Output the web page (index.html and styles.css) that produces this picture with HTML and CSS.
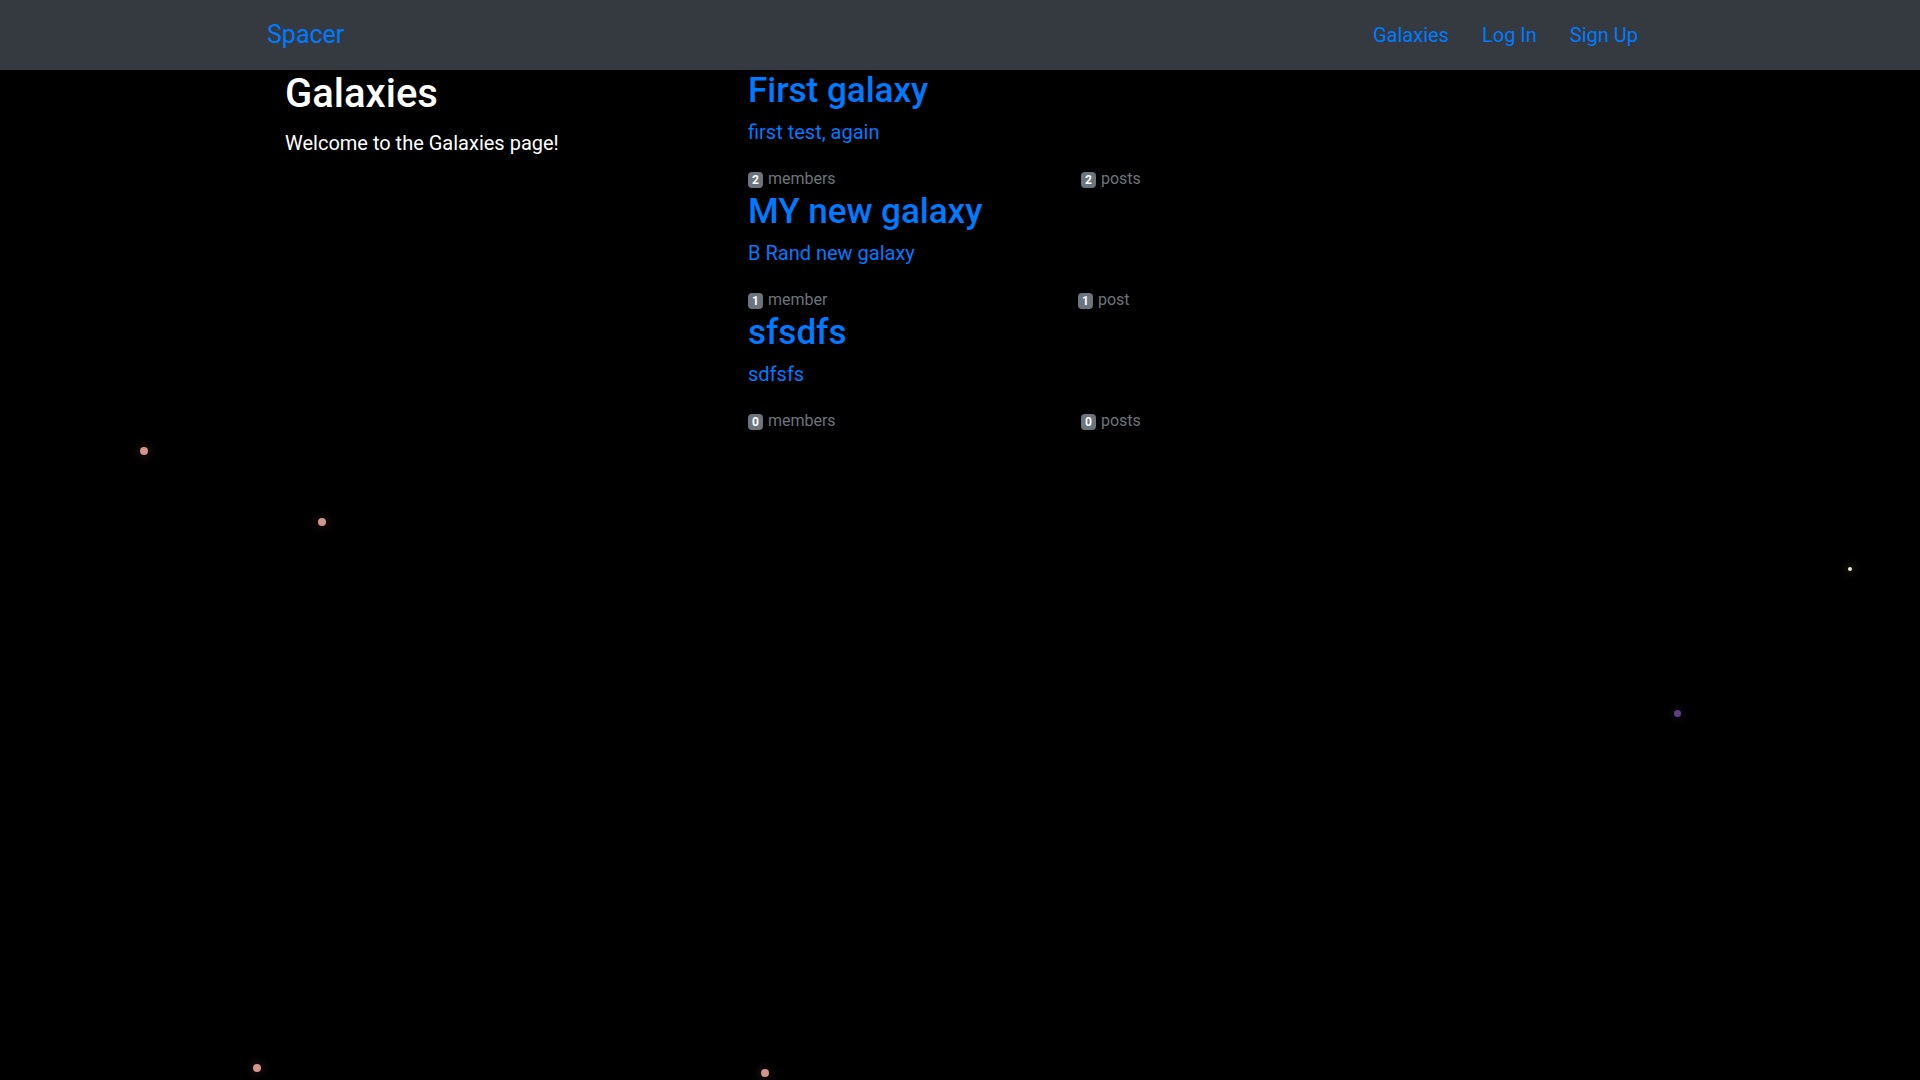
FILE: index.html
```html
<!DOCTYPE html>
<html lang="en">
<head>
<meta charset="utf-8">
<title>Spacer</title>
<link rel="stylesheet" href="styles.css">
</head>
<body>
<div class="sky">
  <span class="star star-pink" style="left:140px;top:447px"></span>
  <span class="star star-pink" style="left:318px;top:518px"></span>
  <span class="star star-cream" style="left:1848px;top:567px"></span>
  <span class="star star-purple" style="left:1674px;top:710px"></span>
  <span class="star star-pink" style="left:253px;top:1064px"></span>
  <span class="star star-pink" style="left:761px;top:1069px"></span>
</div>
<nav class="navbar">
  <div class="nav-inner">
    <a class="brand" href="#">Spacer</a>
    <div class="nav-links">
      <a class="nav-link" href="#">Galaxies</a>
      <a class="nav-link" href="#">Log In</a>
      <a class="nav-link" href="#">Sign Up</a>
    </div>
  </div>
</nav>
<main class="main">
  <section class="intro">
    <h1 class="page-title">Galaxies</h1>
    <p class="welcome">Welcome to the Galaxies page!</p>
  </section>
  <section class="galaxy-list">
    <div class="galaxy">
      <a class="galaxy-title" href="#">First galaxy</a>
      <a class="galaxy-desc" href="#">first test, again</a>
      <div class="meta">
        <span class="meta-item"><span class="badge">2</span>members</span>
        <span class="meta-item"><span class="badge">2</span>posts</span>
      </div>
    </div>
    <div class="galaxy">
      <a class="galaxy-title" href="#">MY new galaxy</a>
      <a class="galaxy-desc" href="#">B Rand new galaxy</a>
      <div class="meta">
        <span class="meta-item"><span class="badge">1</span>member</span>
        <span class="meta-item shift"><span class="badge">1</span>post</span>
      </div>
    </div>
    <div class="galaxy">
      <a class="galaxy-title" href="#">sfsdfs</a>
      <a class="galaxy-desc" href="#">sdfsfs</a>
      <div class="meta">
        <span class="meta-item"><span class="badge">0</span>members</span>
        <span class="meta-item"><span class="badge">0</span>posts</span>
      </div>
    </div>
  </section>
</main>
</body>
</html>
```
FILE: styles.css
```css
html, body {
  margin: 0;
  padding: 0;
}
body {
  background: #000;
  color: #fff;
  font-family: Roboto, "Liberation Sans", sans-serif;
  font-size: 20px;
  line-height: 1.5;
  min-height: 1080px;
  position: relative;
  overflow: hidden;
}
a {
  color: #007bff;
  text-decoration: none;
}
.sky {
  position: absolute;
  inset: 0;
  pointer-events: none;
}
.star {
  position: absolute;
  border-radius: 50%;
}
.star-pink {
  width: 8px;
  height: 8px;
  background: #d4968c;
  box-shadow: 0 0 8px 3px rgba(212, 150, 140, 0.12);
}
.star-cream {
  width: 4px;
  height: 4px;
  background: #f6ebc8;
  box-shadow: 0 0 8px 3px rgba(246, 235, 200, 0.1);
}
.star-purple {
  width: 7px;
  height: 7px;
  background: #5e3f80;
  box-shadow: 0 0 6px 2px rgba(94, 63, 128, 0.25);
}
.navbar {
  background: #343a40;
  height: 70px;
  position: relative;
}
.nav-inner {
  max-width: 1416px;
  margin: 0 auto;
  height: 100%;
  padding: 0 30px 0 15px;
  box-sizing: border-box;
  display: flex;
  align-items: center;
  justify-content: space-between;
}
.brand {
  font-size: 25px;
  line-height: 1.5;
}
.nav-links {
  display: flex;
  gap: 33px;
}
.nav-link {
  font-size: 20px;
  line-height: 1.5;
}
.main {
  max-width: 1416px;
  margin: 0 auto;
  padding-left: 33px;
  box-sizing: border-box;
  display: flex;
  position: relative;
}
.intro {
  width: 463px;
  flex: none;
}
.page-title {
  margin: 0 0 10px;
  font-size: 40px;
  line-height: 1.2;
  font-weight: 500;
}
.welcome {
  margin: 0;
  font-size: 20px;
  line-height: 1.5;
}
.galaxy-list {
  display: flex;
  flex-direction: column;
}
.galaxy {
  display: flex;
  flex-direction: column;
}
.galaxy-title {
  font-size: 35px;
  line-height: 1.2;
  font-weight: 500;
  margin-bottom: 5px;
}
.galaxy-desc {
  font-size: 20px;
  line-height: 1.5;
  margin-bottom: 20px;
}
.meta {
  display: grid;
  grid-template-columns: 333px auto;
  font-size: 16px;
  line-height: 24px;
  color: #6c757d;
}
.meta-item.shift {
  margin-left: -3px;
}
.badge {
  display: inline-block;
  background: #6c757d;
  color: #fff;
  font-size: 12px;
  font-weight: 700;
  line-height: 16px;
  padding: 0 4px;
  border-radius: 4px;
  margin-right: 5px;
}
```
